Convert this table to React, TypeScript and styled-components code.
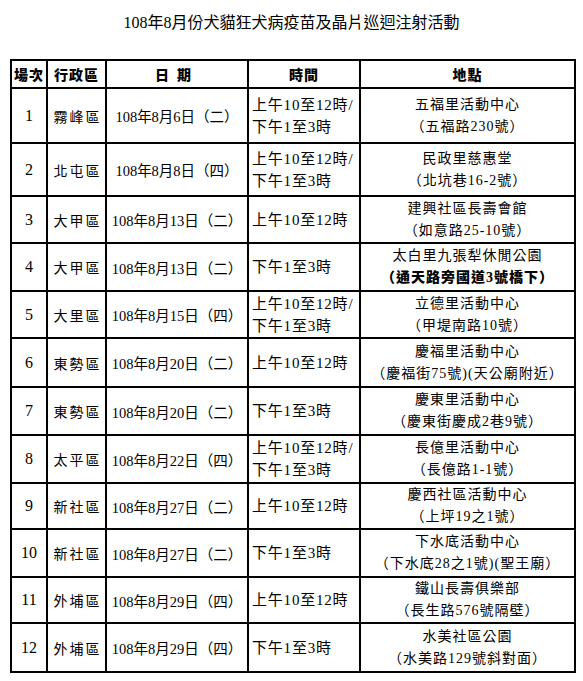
import React from 'react';
import styled, { createGlobalStyle } from 'styled-components';

const GlobalStyle = createGlobalStyle`
  html, body {
    margin: 0;
    padding: 0;
    background: #ffffff;
  }
  body {
    font-family: 'Liberation Serif', 'Noto Sans CJK TC', serif;
    color: #000000;
  }
`;

const Page = styled.div`
  width: 583px;
  padding-top: 13px;
`;

const Title = styled.h1`
  margin: 0;
  font-size: 16px;
  line-height: 20px;
  font-weight: normal;
  text-align: center;
`;

const Table = styled.table`
  margin: 26px 0 0 10px;
  width: 564px;
  border-collapse: collapse;
  table-layout: fixed;
  border: 2px solid #000;
`;

const HeadRow = styled.tr`
  height: 28px;
`;

const HeadCell = styled.th<{ $spaced?: boolean }>`
  border: 2px solid #000;
  padding: 0;
  font-family: 'Noto Sans CJK TC', sans-serif;
  font-weight: 900;
  font-size: 14px;
  line-height: 16px;
  letter-spacing: ${(p) => (p.$spaced ? '8px' : '1px')};
  text-align: center;
  white-space: nowrap;
`;

const Cell = styled.td<{ $align?: 'left' | 'center' }>`
  border: 2px solid #000;
  padding: 0 0 0 ${(p) => (p.$align === 'left' ? '3px' : '0')};
  text-align: ${(p) => p.$align ?? 'center'};
  vertical-align: middle;
  white-space: nowrap;
  overflow: hidden;
`;

const NoText = styled.span`
  font-size: 16px;
`;

const DistrictText = styled.span`
  font-size: 14px;
  letter-spacing: 2px;
  margin-right: -2px;
`;

const DateText = styled.span`
  font-size: 14.5px;
`;

const TimeText = styled.div`
  font-size: 15px;
  line-height: 22px;
  letter-spacing: 0.8px;
`;

const PlaceText = styled.div<{ $bold?: boolean }>`
  font-size: 14px;
  line-height: 22px;
  letter-spacing: 1px;
  font-weight: ${(p) => (p.$bold ? 900 : 'normal')};
`;

type Row = {
  no: number;
  district: string;
  date: string;
  time: string[];
  place: string;
  addr: string;
  bold?: boolean;
  h: number;
};

const BOTH = ['上午10至12時/', '下午1至3時'];
const AM = ['上午10至12時'];
const PM = ['下午1至3時'];

// h = row pitch in the original sheet
const rows: Row[] = [
  { no: 1, district: '霧峰區', date: '108年8月6日（二）', time: BOTH, place: '五福里活動中心', addr: '（五福路230號）', h: 55 },
  { no: 2, district: '北屯區', date: '108年8月8日（四）', time: BOTH, place: '民政里慈惠堂', addr: '（北坑巷16-2號）', h: 53 },
  { no: 3, district: '大甲區', date: '108年8月13日（二）', time: AM, place: '建興社區長壽會館', addr: '（如意路25-10號）', h: 47 },
  { no: 4, district: '大甲區', date: '108年8月13日（二）', time: PM, place: '太白里九張犁休閒公園', addr: '（通天路旁國道3號橋下）', bold: true, h: 48 },
  { no: 5, district: '大里區', date: '108年8月15日（四）', time: BOTH, place: '立德里活動中心', addr: '（甲堤南路10號）', h: 47 },
  { no: 6, district: '東勢區', date: '108年8月20日（二）', time: AM, place: '慶福里活動中心', addr: '（慶福街75號)(天公廟附近）', h: 49 },
  { no: 7, district: '東勢區', date: '108年8月20日（二）', time: PM, place: '慶東里活動中心', addr: '（慶東街慶成2巷9號）', h: 48 },
  { no: 8, district: '太平區', date: '108年8月22日（四）', time: BOTH, place: '長億里活動中心', addr: '（長億路1-1號）', h: 48 },
  { no: 9, district: '新社區', date: '108年8月27日（二）', time: AM, place: '慶西社區活動中心', addr: '（上坪19之1號）', h: 43 },
  { no: 10, district: '新社區', date: '108年8月27日（二）', time: PM, place: '下水底活動中心', addr: '（下水底28之1號)(聖王廟）', h: 48 },
  { no: 11, district: '外埔區', date: '108年8月29日（四）', time: AM, place: '鐵山長壽俱樂部', addr: '（長生路576號隔壁）', h: 46 },
  { no: 12, district: '外埔區', date: '108年8月29日（四）', time: PM, place: '水美社區公園', addr: '（水美路129號斜對面）', h: 49 },
];

export default function App() {
  return (
    <Page>
      <GlobalStyle />
      <Title>108年8月份犬貓狂犬病疫苗及晶片巡迴注射活動</Title>
      <Table>
        <colgroup>
          <col style={{ width: 36 }} />
          <col style={{ width: 59 }} />
          <col style={{ width: 142 }} />
          <col style={{ width: 112 }} />
          <col style={{ width: 215 }} />
        </colgroup>
        <thead>
          <HeadRow>
            <HeadCell>場次</HeadCell>
            <HeadCell>行政區</HeadCell>
            <HeadCell $spaced>日期</HeadCell>
            <HeadCell>時間</HeadCell>
            <HeadCell>地點</HeadCell>
          </HeadRow>
        </thead>
        <tbody>
          {rows.map((r) => (
            <tr key={r.no} style={{ height: r.h }}>
              <Cell>
                <NoText>{r.no}</NoText>
              </Cell>
              <Cell>
                <DistrictText>{r.district}</DistrictText>
              </Cell>
              <Cell>
                <DateText>{r.date}</DateText>
              </Cell>
              <Cell $align="left">
                {r.time.map((t) => (
                  <TimeText key={t}>{t}</TimeText>
                ))}
              </Cell>
              <Cell>
                <PlaceText>{r.place}</PlaceText>
                <PlaceText $bold={r.bold}>{r.addr}</PlaceText>
              </Cell>
            </tr>
          ))}
        </tbody>
      </Table>
    </Page>
  );
}
